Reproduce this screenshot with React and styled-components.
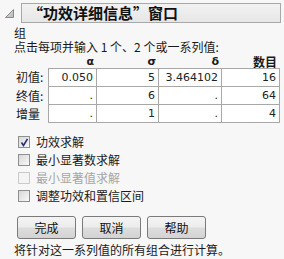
import React from 'react'
import styled, { createGlobalStyle } from 'styled-components'

const GlobalStyle = createGlobalStyle`
  *, *::before, *::after {
    box-sizing: border-box;
  }
  html, body {
    margin: 0;
    padding: 0;
    background: #f7f7f7;
  }
  body {
    font-family: "Noto Sans CJK SC", "Liberation Sans", sans-serif;
    font-size: 12px;
    color: #1a1a1a;
  }
`

const Panel = styled.div`
  width: 284px;
  height: 259px;
  padding-top: 3px;
  overflow: hidden;
`

const TitleRow = styled.div`
  display: flex;
  align-items: center;
  padding-left: 5px;
  gap: 7px;
`

const TitleBox = styled.div`
  width: 260px;
  height: 20px;
  border: 1px solid #a8a8a8;
  background: linear-gradient(#f2f2f2, #e6e6e6);
  display: flex;
  align-items: center;
  padding-left: 6px;
  font-weight: bold;
  font-size: 15px;
  line-height: 18px;
  color: #111;
`

const Body = styled.div`
  padding-left: 14px;
  margin-top: 3px;
`

const Line = styled.div`
  height: 14px;
  line-height: 14px;
  font-size: 12px;
`

const Grid = styled.div`
  display: grid;
  grid-template-columns: 34px 49px 62px 63px 58px;
  margin-top: 1px;
`

const Head = styled.div`
  height: 13px;
  line-height: 13px;
  text-align: right;
  font-weight: bold;
  padding-right: 3px;
  font-family: ${(p) => (p.cjk ? '"Noto Sans CJK SC", sans-serif' : '"DejaVu Sans", sans-serif')};
  font-size: ${(p) => (p.cjk ? '12px' : '11px')};
`

const RowLabel = styled.div`
  height: ${(p) => (p.top ? '19px' : '18px')};
  line-height: 18px;
  padding-left: 2px;
`

const Cell = styled.div`
  height: ${(p) => (p.top ? '19px' : '18px')};
  line-height: 17px;
  background: #fff;
  border-right: 1px solid #a8a8a8;
  border-bottom: 1px solid #a8a8a8;
  border-left: ${(p) => (p.first ? '1px solid #a8a8a8' : 'none')};
  border-top: ${(p) => (p.top ? '1px solid #a8a8a8' : 'none')};
  text-align: right;
  padding-right: 3px;
  font-family: "DejaVu Sans", sans-serif;
  font-size: 11px;
  color: #222;
`

const Checks = styled.div`
  margin-top: 10px;
  padding-left: 4px;
`

const CheckRow = styled.label`
  display: flex;
  align-items: center;
  gap: 6px;
  height: 18px;
  line-height: 18px;
  color: ${(p) => (p.disabled ? '#a6a6a6' : '#1a1a1a')};
`

const Box = styled.span`
  width: 12px;
  height: 12px;
  border: 1px solid ${(p) => (p.disabled ? '#cacaca' : '#8e8f8f')};
  background: ${(p) => (p.disabled ? '#f4f4f4' : 'linear-gradient(135deg, #d8d8d8, #f8f8f8)')};
  display: flex;
  align-items: center;
  justify-content: center;
`

const Buttons = styled.div`
  display: flex;
  gap: 6px;
  margin-top: 11px;
  padding-left: 3px;
`

const Button = styled.button`
  width: 59px;
  height: 23px;
  border: 1px solid #7a7a7a;
  border-radius: 3px;
  background: linear-gradient(#f4f4f4 0%, #ececec 48%, #dddddd 52%, #d3d3d3 100%);
  font-family: "Noto Sans CJK SC", sans-serif;
  font-size: 12px;
  color: #111;
  padding: 0;
`

const Note = styled.div`
  margin-top: 3px;
  height: 15px;
  line-height: 15px;
`

const Disclosure = () => (
  <svg width="9" height="9" viewBox="0 0 9 9">
    <defs>
      <linearGradient id="tri" x1="0" y1="0" x2="1" y2="1">
        <stop offset="0" stopColor="#e4e4e4" />
        <stop offset="1" stopColor="#b8b8b8" />
      </linearGradient>
    </defs>
    <polygon points="0.5,8.5 8.5,8.5 8.5,0.5" fill="url(#tri)" stroke="#8a8a8a" strokeWidth="1" />
  </svg>
)

const Tick = () => (
  <svg width="9" height="9" viewBox="0 0 9 9">
    <path d="M1.5 4.5 L3.5 7.5 L7.5 0.8" fill="none" stroke="#2b2d7a" strokeWidth="1.6" />
  </svg>
)

const rows = [
  { label: '初值:', values: ['0.050', '5', '3.464102', '16'] },
  { label: '终值:', values: ['.', '6', '.', '64'] },
  { label: '增量', values: ['.', '1', '.', '4'] }
]

const options = [
  { text: '功效求解', checked: true },
  { text: '最小显著数求解' },
  { text: '最小显著值求解', disabled: true },
  { text: '调整功效和置信区间' }
]

export default function App () {
  return (
    <Panel>
      <GlobalStyle />
      <TitleRow>
        <Disclosure />
        <TitleBox>“功效详细信息”窗口</TitleBox>
      </TitleRow>
      <Body>
        <Line>组</Line>
        <Line>点击每项并输入 1 个、2 个或一系列值:</Line>
        <Grid>
          <div />
          <Head>α</Head>
          <Head>σ</Head>
          <Head>δ</Head>
          <Head cjk>数目</Head>
          {rows.map((row, r) => (
            <React.Fragment key={row.label}>
              <RowLabel top={r === 0}>{row.label}</RowLabel>
              {row.values.map((v, i) => (
                <Cell key={i} first={i === 0} top={r === 0}>{v}</Cell>
              ))}
            </React.Fragment>
          ))}
        </Grid>
        <Checks>
          {options.map((o) => (
            <CheckRow key={o.text} disabled={o.disabled}>
              <Box disabled={o.disabled}>{o.checked && <Tick />}</Box>
              {o.text}
            </CheckRow>
          ))}
        </Checks>
        <Buttons>
          <Button>完成</Button>
          <Button>取消</Button>
          <Button>帮助</Button>
        </Buttons>
        <Note>将针对这一系列值的所有组合进行计算。</Note>
      </Body>
    </Panel>
  )
}
